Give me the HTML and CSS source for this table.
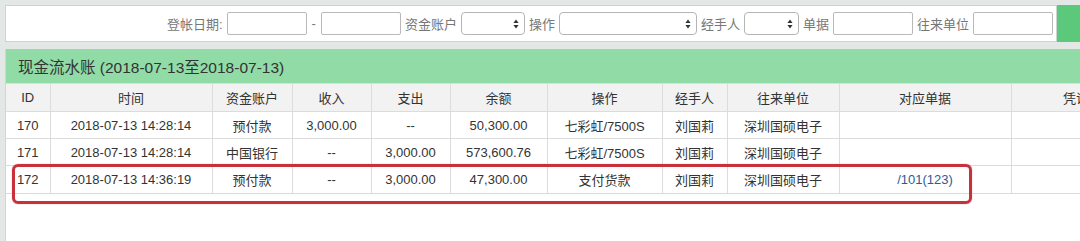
FILE: index.html
```html
<!DOCTYPE html>
<html lang="zh">
<head>
<meta charset="utf-8">
<title>现金流水账</title>
<link rel="stylesheet" href="styles.css">
</head>
<body>
<div class="topbar">
  <div class="search">
    <span class="lbl">登帐日期:</span>
    <span class="inp"></span>
    <span class="dash">-</span>
    <span class="inp"></span>
    <span class="lbl">资金账户</span>
    <span class="sel w64"><svg width="6" height="10" viewBox="0 0 6 10"><path d="M3 0.5L5.6 4H0.4Z M3 9.5L5.6 6H0.4Z" fill="#333"/></svg></span>
    <span class="lbl">操作</span>
    <span class="sel w138"><svg width="6" height="10" viewBox="0 0 6 10"><path d="M3 0.5L5.6 4H0.4Z M3 9.5L5.6 6H0.4Z" fill="#333"/></svg></span>
    <span class="lbl">经手人</span>
    <span class="sel w55"><svg width="6" height="10" viewBox="0 0 6 10"><path d="M3 0.5L5.6 4H0.4Z M3 9.5L5.6 6H0.4Z" fill="#333"/></svg></span>
    <span class="lbl">单据</span>
    <span class="inp"></span>
    <span class="lbl">往来单位</span>
    <span class="inp"></span>
  </div>
  <div class="gobtn"></div>
</div>

<div class="panel">
  <div class="panel-head">现金流水账 (2018-07-13至2018-07-13)</div>
  <table class="grid">
    <colgroup>
      <col class="c1"><col class="c2"><col class="c3"><col class="c4"><col class="c5"><col class="c6"><col class="c7"><col class="c8"><col class="c9"><col class="c10"><col class="c11">
    </colgroup>
    <thead>
      <tr><th>ID</th><th>时间</th><th>资金账户</th><th>收入</th><th>支出</th><th>余额</th><th>操作</th><th>经手人</th><th>往来单位</th><th>对应单据</th><th>凭证</th></tr>
    </thead>
    <tbody>
      <tr><td>170</td><td>2018-07-13 14:28:14</td><td>预付款</td><td>3,000.00</td><td>--</td><td>50,300.00</td><td>七彩虹/7500S</td><td>刘国莉</td><td>深圳国硕电子</td><td></td><td></td></tr>
      <tr><td>171</td><td>2018-07-13 14:28:14</td><td>中国银行</td><td>--</td><td>3,000.00</td><td>573,600.76</td><td>七彩虹/7500S</td><td>刘国莉</td><td>深圳国硕电子</td><td></td><td></td></tr>
      <tr class="last"><td>172</td><td>2018-07-13 14:36:19</td><td>预付款</td><td>--</td><td>3,000.00</td><td>47,300.00</td><td>支付货款</td><td>刘国莉</td><td>深圳国硕电子</td><td><span class="link">/101(123)</span></td><td></td></tr>
    </tbody>
  </table>
  <div class="mark"></div>
</div>
</body>
</html>
```
FILE: styles.css
```css
html, body {
  margin: 0;
  padding: 0;
  width: 1080px;
  height: 241px;
  overflow: hidden;
  background: #e3e8e7;
  font-family: "Liberation Sans", "Noto Sans CJK SC", sans-serif;
  font-size: 13px;
  color: #333;
}

.topbar {
  display: flex;
  margin: 5px 0 0 5px;
  height: 37px;
}

.search {
  flex: 1;
  display: flex;
  align-items: center;
  justify-content: flex-end;
  gap: 4px;
  padding-right: 3px;
  background: #fff;
  border: 1px solid #c9d5d1;
  box-sizing: border-box;
  color: #777;
}

.lbl {
  white-space: nowrap;
}

.dash {
  margin: 0 1px;
}

.inp {
  display: block;
  width: 80px;
  height: 23px;
  box-sizing: border-box;
  border: 1px solid #b9b9b9;
  border-radius: 2px;
  background: #fff;
}

.sel {
  display: flex;
  align-items: center;
  justify-content: flex-end;
  height: 23px;
  box-sizing: border-box;
  border: 1px solid #b5b5b5;
  border-radius: 4px;
  padding-right: 5px;
  background: #fff;
}

.w64 { width: 64px; }
.w138 { width: 138px; }
.w55 { width: 55px; }

.gobtn {
  width: 23px;
  background: #5cc87c;
}

.panel {
  position: relative;
  margin: 7px 0 0 5px;
  height: 200px;
  background: #fff;
  border-left: 1px solid #cfd6d4;
  overflow: hidden;
}

.panel-head {
  height: 34px;
  display: flex;
  align-items: center;
  padding-left: 12px;
  background: #90dba6;
  font-size: 15.5px;
  color: #333;
}

.grid {
  border-collapse: collapse;
  table-layout: fixed;
  width: 1135px;
}

.c1 { width: 44px; }
.c2 { width: 162px; }
.c3 { width: 80px; }
.c4 { width: 79px; }
.c5 { width: 79px; }
.c6 { width: 97px; }
.c7 { width: 115px; }
.c8 { width: 65px; }
.c9 { width: 112px; }
.c10 { width: 172px; }
.c11 { width: 130px; }

.grid th,
.grid td {
  padding: 0;
  text-align: center;
  border: 1px solid #dcdcdc;
  white-space: nowrap;
  font-weight: normal;
}

.grid th:first-child,
.grid td:first-child {
  border-left: none;
}

.grid th {
  height: 27px;
  background: #f2f2f2;
  color: #333;
}

.grid td {
  height: 26px;
}

.grid tr.last td {
  height: 27px;
}

.link {
  color: #2d5c95;
}

.mark {
  position: absolute;
  left: 6px;
  top: 115px;
  width: 960px;
  height: 40px;
  box-sizing: border-box;
  border: 3px solid #c8313b;
  border-radius: 6px;
  box-shadow: 0 0 1px rgba(160, 20, 30, 0.6);
}
```
